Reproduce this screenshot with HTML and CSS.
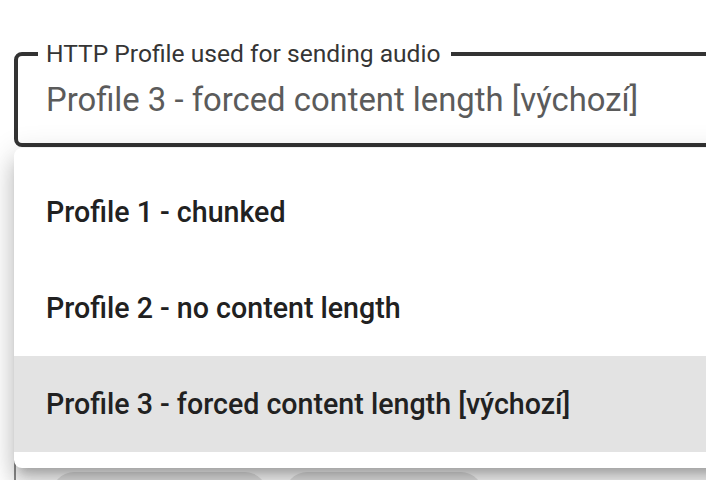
FILE: index.html
```html
<!DOCTYPE html>
<html lang="cs">
<head>
<meta charset="utf-8">
<title>HTTP Profile select</title>
<link rel="stylesheet" href="styles.css">
</head>
<body>
<div class="page">
  <fieldset class="field">
    <legend class="field-label">HTTP Profile used for sending audio</legend>
    <div class="field-value">Profile 3 - forced content length [výchozí]</div>
  </fieldset>
  <div class="below">
    <div class="chips">
      <span class="chip chip-a"></span>
      <span class="chip chip-b"></span>
    </div>
  </div>
  <ul class="menu">
    <li class="menu-item">Profile 1 - chunked</li>
    <li class="menu-item">Profile 2 - no content length</li>
    <li class="menu-item selected">Profile 3 - forced content length [výchozí]</li>
  </ul>
</div>
</body>
</html>
```
FILE: styles.css
```css
html, body {
  margin: 0;
  padding: 0;
  background: #ffffff;
  overflow: hidden;
  width: 706px;
  height: 480px;
}
body {
  font-family: Roboto, "Liberation Sans", Arial, sans-serif;
}
.page {
  position: relative;
  padding: 42px 0 0 14px;
  width: 780px;
}
.field {
  margin: 0;
  width: 760px;
  box-sizing: border-box;
  border: 4px solid #333333;
  border-radius: 8px;
  padding: 14px 0 23px 28px;
}
.field-label {
  margin-left: -8px;
  padding: 0 10px 0 8px;
  font-size: 24.6px;
  line-height: 24px;
  color: #353535;
}
.field-value {
  font-size: 32.8px;
  line-height: 40px;
  color: #5b5b5b;
  white-space: nowrap;
}
.below {
  margin-top: 10px;
  border-left: 2px solid #8c8c8c;
  padding: 315px 0 0 36px;
  height: 60px;
}
.chips {
  display: flex;
  gap: 18px;
}
.chip {
  display: block;
  height: 44px;
  border-radius: 22px;
  background: #e4e4e4;
}
.chip-a { width: 215px; }
.chip-b { width: 198px; }
.menu {
  position: absolute;
  top: 148px;
  left: 14px;
  width: 760px;
  margin: 0;
  padding: 16px 0;
  list-style: none;
  background: #ffffff;
  border-radius: 8px;
  box-shadow: 0 10px 10px -6px rgba(0,0,0,0.2), 0 16px 20px 2px rgba(0,0,0,0.14), 0 6px 28px 4px rgba(0,0,0,0.12);
}
.menu-item {
  height: 96px;
  display: flex;
  align-items: center;
  padding-left: 32px;
  font-size: 28.6px;
  font-weight: 500;
  color: #212121;
  white-space: nowrap;
}
.menu-item.selected {
  background: #e3e3e3;
}
```
